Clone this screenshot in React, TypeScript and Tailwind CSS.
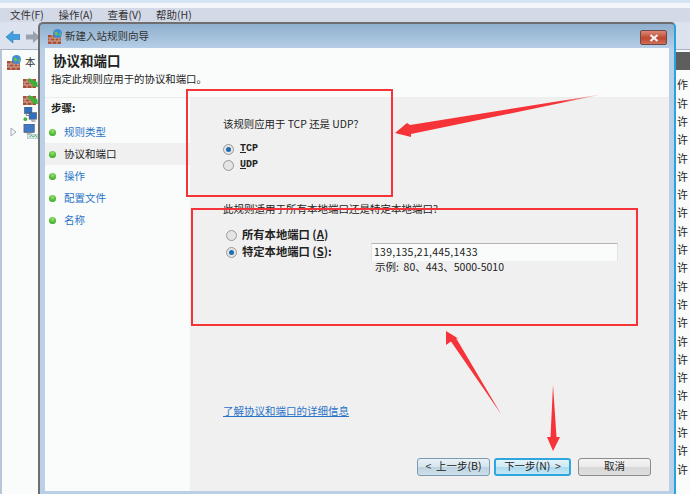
const cjk = "font-['Noto_Sans_CJK_SC','Liberation_Sans',sans-serif]"

function FirewallIcon({ arrow }: { arrow?: boolean }) {
  return (
    <svg width="15" height="15" viewBox="0 0 15 15" className="shrink-0">
      <rect x="0" y="6" width="13" height="9" fill="#a8503a" />
      <path d="M0 9h13M0 12h13M4 6v3M9 6v3M2 9v3M7 9v3M11 9v3M4 12v3M9 12v3" stroke="#e3c9b8" strokeWidth="0.7" />
      {arrow ? (
        <path d="M6 5l8 4v-2l1 7-7-1 2-1-5-4z" fill="#3fae3a" />
      ) : (
        <>
          <circle cx="9.5" cy="4.5" r="4.5" fill="#3c8fd6" />
          <path d="M7 2.5c2 0 3 1 3 2.5s-2 1.500-3 .5zM11 5l2-1v2l-1 1z" fill="#6cc04a" />
        </>
      )}
    </svg>
  )
}

function NetIcon() {
  return (
    <svg width="15" height="15" viewBox="0 0 15 16" className="shrink-0">
      <rect x="1" y="0" width="8" height="7" fill="#2f6fc4" stroke="#555" strokeWidth="0.6" />
      <rect x="6" y="6" width="8" height="7" fill="#2f6fc4" stroke="#555" strokeWidth="0.6" />
      <path d="M3 7v2h3M9 13v2h4" stroke="#777" fill="none" />
      <circle cx="2" cy="13" r="2" fill="#4caf3c" />
    </svg>
  )
}

function MonitorIcon() {
  return (
    <svg width="15" height="15" viewBox="0 0 16 16" className="shrink-0">
      <rect x="1" y="0" width="11" height="9" fill="#3f78c4" stroke="#555" strokeWidth="0.7" />
      <path d="M4 10h5v1H4z" fill="#888" />
      <rect x="5" y="11" width="11" height="5" fill="#d6e6f2" stroke="#8aa" strokeWidth="0.5" />
      <path d="M7 14l2-2 2 2 2-2 2 2" stroke="#4caf3c" fill="none" />
    </svg>
  )
}

function Dot() {
  return <span className="w-[7px] h-[7px] rounded-full shrink-0 bg-[radial-gradient(circle_at_50%_30%,#9be36e,#3fae2c_70%)]" />
}

function Radio({ on }: { on?: boolean }) {
  return (
    <span className="w-[11px] h-[11px] rounded-full border border-[#9a9a9a] bg-[#e4e4e4] shrink-0 flex items-center justify-center">
      {on && <span className="w-[5px] h-[5px] rounded-full bg-[#1f6fb0]" />}
    </span>
  )
}

function Step({ label, active }: { label: string; active?: boolean }) {
  return (
    <div className={`h-[22px] flex items-center gap-[8px] pl-[4px] ${active ? 'bg-[#f0f0f0] text-[#222]' : 'text-[#2a73c8]'}`}>
      <Dot />
      <span>{label}</span>
    </div>
  )
}

function WizButton({ children, tone }: { children: React.ReactNode; tone: 'blue' | 'focus' | 'gray' }) {
  const cls = {
    blue: 'w-[73px] border-[#7d9bb0] bg-[linear-gradient(#e8f1f6_0%,#d6e5ee_48%,#bdd3e0_52%,#cde0ea_100%)]',
    focus: 'w-[77px] border-[#2fa6de] border-2 bg-[linear-gradient(#e4f4fb_0%,#cfe9f6_48%,#aedbef_52%,#c3e6f4_100%)]',
    gray: 'w-[73px] border-[#8c8c8c] bg-[linear-gradient(#f4f4f4_0%,#ebebeb_48%,#d9d9d9_52%,#dedede_100%)]',
  }[tone]
  return (
    <div className={`h-[18px] rounded-[3px] border flex items-center justify-center text-[10.5px] text-[#222] whitespace-pre ${cls}`}>
      {children}
    </div>
  )
}

export default function App() {
  const rows = Array.from({ length: 21 })
  return (
    <div className={`relative w-[690px] h-[494px] overflow-hidden bg-[#f9fcfa] text-[10.5px] leading-none ${cjk}`}>
      {/* app behind the wizard */}
      <div className="h-[8px] bg-[linear-gradient(#d5e4f2_40%,#f2f6fa_40%)]" />
      <div className="h-[14px] bg-[#d3d9e7] flex items-center pl-[10px] gap-[14.500px] text-[#333] text-[10.5px]">
        <span>文件(F)</span>
        <span>操作(A)</span>
        <span>查看(V)</span>
        <span>帮助(H)</span>
      </div>
      <div className="h-[28px] bg-[#dde3ee] border-b border-[#a9b4c6] flex items-center pl-[6px] gap-[6px] pt-[2px]">
        <svg width="14" height="14" viewBox="0 0 14 14">
          <path d="M0 7l7-6v3.500h7v5H7V13z" fill="#3fa0e0" stroke="#2a78b8" strokeWidth="0.6" />
        </svg>
        <svg width="14" height="14" viewBox="0 0 14 14">
          <path d="M14 7L7 1v3.500H0v5h7V13z" fill="#9aa3ad" />
        </svg>
      </div>
      <div className="flex h-[444px]">
        <div className="w-[38px] border-l-2 border-[#b8c6d8] flex flex-col pl-[5px] pt-[5px] text-[#333] overflow-hidden">
          <div className="flex items-center gap-[3px] whitespace-nowrap">
            <FirewallIcon />
            <span>本</span>
          </div>
          <div className="mt-[2px] flex flex-col">
            <div className="h-[17px] flex items-center pl-[16px]"><FirewallIcon arrow /></div>
            <div className="h-[17px] flex items-center pl-[16px]"><FirewallIcon arrow /></div>
            <div className="h-[17px] flex items-center pl-[16px]"><NetIcon /></div>
            <div className="h-[17px] flex items-center">
              <svg width="16" height="10" viewBox="0 0 16 10" className="shrink-0">
                <path d="M4 1l5 4-5 4z" fill="#f4f6f6" stroke="#a5adb5" />
              </svg>
              <MonitorIcon />
            </div>
          </div>
        </div>
        <div className="ml-auto w-[14px] flex flex-col">
          <div className="h-[18px] mt-[2px] shrink-0 bg-[#5e5e5e]" />
          <div className="h-[20px] mt-[4px] shrink-0 text-[11px] text-[#222] pl-[1px] flex items-center">作</div>
          {rows.map((_, i) => (
            <div key={i} className="h-[18.3px] shrink-0 text-[11px] text-[#222] pl-[1px] flex items-center">许</div>
          ))}
        </div>
      </div>

      {/* wizard window */}
      <div className="absolute left-[38px] top-[22px] w-[638px] h-[480px] rounded-t-[5px] border-2 border-[#6e6e6e] border-r-[#29a3dc] bg-[linear-gradient(#8fb0ce,#b9d0e8_26px)] flex flex-col px-[5px]">
        <div className="h-[24px] shrink-0 flex items-center gap-[2px] text-[#333] relative">
          <span className="ml-[3px] flex"><FirewallIcon /></span>
          <span className="text-[10.5px]">新建入站规则向导</span>
          <div className="absolute right-[2px] top-[6px] w-[27px] h-[15px] rounded-[2px] border border-[#6c4a4a] bg-[linear-gradient(#dc8a78,#c0472f_55%,#d06f58)] flex items-center justify-center">
            <svg width="10" height="8" viewBox="0 0 10 8">
              <path d="M1.500 1l7 6M8.500 1l-7 6" stroke="#f4f4f4" strokeWidth="2.2" />
            </svg>
          </div>
        </div>
        <div className="h-[50px] shrink-0 bg-[#f9fcfa] border-b border-[#eceeec] pl-[6px] pt-[4px] text-[#222]">
          <div className="text-[13.5px] font-bold pl-[2px] leading-[16px]">协议和端口</div>
          <div className="mt-[5px] text-[10.400px] leading-[12px]">指定此规则应用于的协议和端口。</div>
        </div>
        <div className="flex flex-1 min-h-0 mb-[9px]">
          <div className="w-[145px] shrink-0 bg-[#f9fcfa] text-[10.5px]">
            <div className="h-[20px] pl-[6px] flex items-center font-bold text-[#222]">步骤:</div>
            <div className="mt-[3px] flex flex-col">
              <Step label="规则类型" />
              <Step label="协议和端口" active />
              <Step label="操作" />
              <Step label="配置文件" />
              <Step label="名称" />
            </div>
          </div>
          <div className="flex-1 bg-[#f0f0f0] pl-[33px] text-[#222] flex flex-col">
            <div className="mt-[20px] text-[10.400px] leading-[12px]">该规则应用于 TCP 还是 UDP?</div>
            <div className="mt-[13px] flex items-center gap-[6px] h-[12px] font-['Liberation_Mono',monospace] font-bold text-[10px]">
              <Radio on />
              <span><span className="underline">T</span>CP</span>
            </div>
            <div className="mt-[4px] flex items-center gap-[6px] h-[12px] font-['Liberation_Mono',monospace] font-bold text-[10px]">
              <Radio />
              <span><span className="underline">U</span>DP</span>
            </div>
            <div className="mt-[32px] text-[10.5px] leading-[12px]">此规则适用于所有本地端口还是特定本地端口?</div>
            <div className="mt-[14px] ml-[3px] flex items-center gap-[5px] h-[12px] font-bold text-[11.3px]">
              <Radio />
              <span>所有本地端口 (<span className="underline">A</span>)</span>
            </div>
            <div className="mt-[5px] ml-[3px] flex items-center gap-[5px] h-[12px] font-bold text-[11.3px]">
              <Radio on />
              <span className="w-[124px]">特定本地端口 (<span className="underline">S</span>):</span>
              <div className="w-[247px] h-[18px] bg-[#f9fcfa] border-t border-[#b5b5b5] border-x border-x-[#e2e2e2] flex items-center pl-[2px] font-normal text-[10.5px] tracking-[0.25px]">
                139,135,21,445,1433
              </div>
            </div>
            <div className="mt-[4px] ml-[152px] h-[12px] text-[10.5px] whitespace-pre">示例:  80、443、5000-5010</div>
            <div className="mt-[132px] text-[10.5px] text-[#2a73c8] underline">了解协议和端口的详细信息</div>
            <div className="mt-[41px] ml-[194px] flex items-center gap-[4px]">
              <WizButton tone="blue">{'<  上一步(B)'}</WizButton>
              <WizButton tone="focus">{'下一步(N)  >'}</WizButton>
              <div className="ml-[3px]">
                <WizButton tone="gray">取消</WizButton>
              </div>
            </div>
          </div>
        </div>
      </div>

      {/* red annotations */}
      <div className="absolute left-[186px] top-[89px] w-[207px] h-[108px] border-[2.5px] border-[#f63338]" />
      <div className="absolute left-[191px] top-[208px] w-[447px] h-[118px] border-[2.5px] border-[#f63338]" />
      <svg className="absolute inset-0 pointer-events-none" width="690" height="494" viewBox="0 0 690 494">
        <defs>
          <linearGradient id="fade" gradientUnits="userSpaceOnUse" x1="604" y1="94" x2="560" y2="102">
            <stop offset="0" stopColor="#f63338" stopOpacity="0.1" />
            <stop offset="1" stopColor="#f63338" />
          </linearGradient>
        </defs>
        <path d="M604 94L410 125l-3-2-12 10 16 4v-3z" fill="url(#fade)" />
        <path d="M446 331v14l5-3.500L501 414l-45-76 3 1z" fill="#f63338" />
        <path d="M553 385l-2.500 52H547l6 14 7-14h-3.500z" fill="#f63338" />
      </svg>
    </div>
  )
}
